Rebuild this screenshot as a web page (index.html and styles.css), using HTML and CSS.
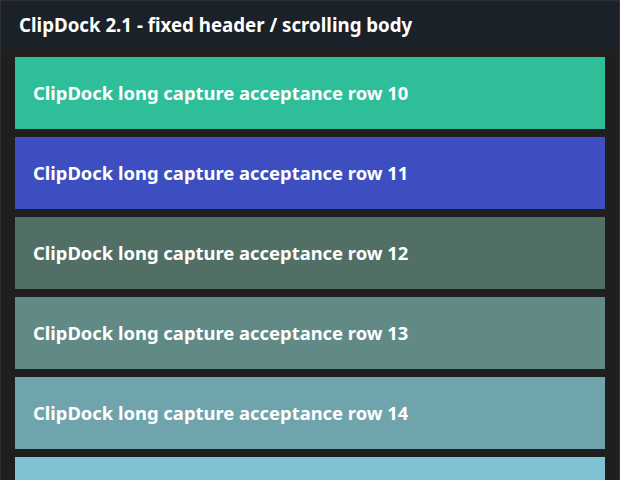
FILE: index.html
```html
<!DOCTYPE html>
<html lang="en">
<head>
    <meta charset="UTF-8">
    <title>ClipDock 2.1</title>
    <link rel="stylesheet" href="styles.css">
</head>
<body>
    <!-- app window: fixed header + scrolling list -->
    <div class="app">
        <div class="header">ClipDock 2.1 - fixed header / scrolling body</div>
        <div class="body">
            <div class="row row10">ClipDock long capture acceptance row 10</div>
            <div class="row row11">ClipDock long capture acceptance row 11</div>
            <div class="row row12">ClipDock long capture acceptance row 12</div>
            <div class="row row13">ClipDock long capture acceptance row 13</div>
            <div class="row row14">ClipDock long capture acceptance row 14</div>
            <div class="row row15">ClipDock long capture acceptance row 15</div>
        </div>
    </div>
</body>
</html>
```

FILE: styles.css
```css
*{
    margin: 0;
    padding: 0;
    box-sizing: border-box;
}
html, body{
    height: 100%;
    background-color: #1f1f1f;
    overflow: hidden;
}
.app{
    height: 480px;
    border: 1px solid #2f2f2f;
    border-bottom: none;
    display: flex;
    flex-direction: column;
    font-family: "Noto Sans", "Open Sans", sans-serif;
    font-weight: bold;
    color: #fff;
}
/* fixed header */
.header{
    flex: none;
    height: 48px;
    background-color: #1b2128;
    padding-left: 18px;
    padding-bottom: 2px;
    display: flex;
    align-items: center;
    font-size: 18.7px;
}
.body{
    flex: 1;
    overflow: hidden;
    padding: 8px 14px 0;
    display: flex;
    flex-direction: column;
    gap: 8px;
}
.row{
    flex: none;
    height: 72px;
    padding-left: 18px;
    padding-bottom: 2px;
    display: flex;
    align-items: center;
    font-size: 18.4px;
}
.row10{ background-color: #2ebe9a; }
.row11{ background-color: #3d4ec1; }
.row12{ background-color: #526f66; }
.row13{ background-color: #618a87; }
.row14{ background-color: #6fa4ac; }
.row15{ background-color: #80c1d3; }
```
